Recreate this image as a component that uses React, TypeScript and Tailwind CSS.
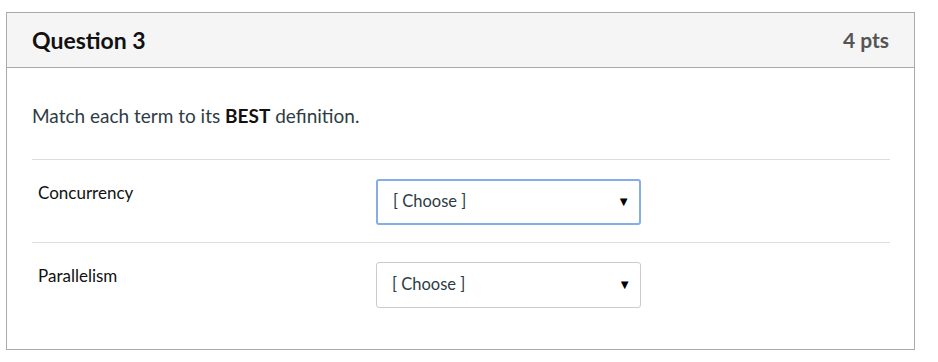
const terms = ["Concurrency", "Parallelism"];

function Choose({ focused }: { focused?: boolean }) {
  return (
    <div
      className={
        "flex h-[46px] w-[265px] items-center justify-between rounded-[3px] bg-white pl-[15px] pr-[9px] text-[16.5px] text-[#2d3b45] " +
        (focused
          ? "border-2 border-[#86acea]"
          : "border border-[#c7cdd1]")
      }
    >
      <span>[ Choose ]</span>
      <span className="text-[13px] text-black">▼</span>
    </div>
  );
}

export default function App() {
  return (
    <div className="h-[362px] w-[938px] bg-white pl-[6px] pt-[12px] font-['Lato','Liberation_Sans',sans-serif]">
      <div className="h-[338px] w-[909px] border border-[#aaaaaa] bg-white">
        <div className="flex h-[55px] items-center justify-between border-b border-[#aaaaaa] bg-[#f5f5f5] px-[25px]">
          <h2 className="text-[23px] font-bold text-[#111]">Question 3</h2>
          <span className="text-[21px] font-bold text-[#555]">4 pts</span>
        </div>

        <div className="px-[24px] pl-[25px]">
          <p className="mt-[34px] text-[19px] text-[#2d3b45]">
            Match each term to its <strong className="text-[#111]">BEST</strong> definition.
          </p>

          <div className="mt-[28px]">
            {terms.map((term, i) => (
              <div
                key={term}
                className="flex items-start border-t border-[#dddddd] pb-[17px] pt-[19px]"
              >
                <div className="w-[344px] pl-[6px] pt-[1px] text-[17px] text-[#111]">
                  {term}
                </div>
                <Choose focused={i === 0} />
              </div>
            ))}
          </div>
        </div>
      </div>
    </div>
  );
}
